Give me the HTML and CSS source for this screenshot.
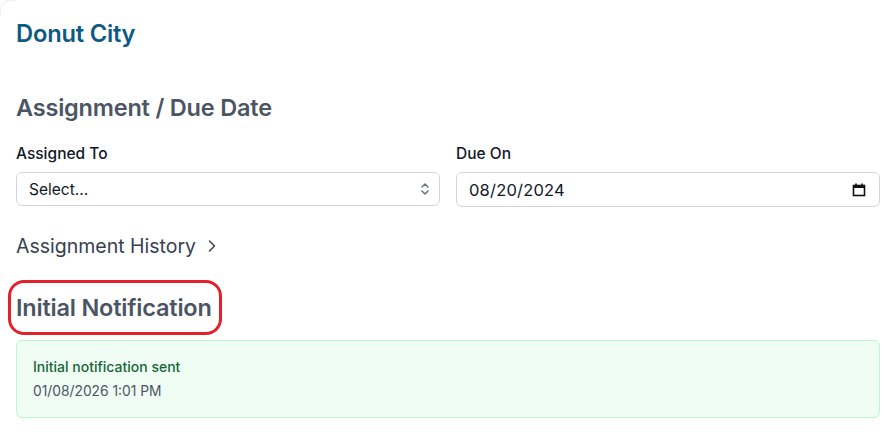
FILE: index.html
```html
<!DOCTYPE html>
<html>
<head>
<meta charset="utf-8">
<link rel="stylesheet" href="styles.css">
</head>
<body>
<div class="page">
  <h1 class="title">Donut City</h1>
  <h2 class="section">Assignment / Due Date</h2>
  <div class="fields">
    <div class="field">
      <div class="label">Assigned To</div>
      <div class="control select">
        <span>Select...</span>
        <svg class="updown" width="10" height="16" viewBox="0 0 10 16"><path d="M2 6l3-3 3 3M2 10l3 3 3-3" fill="none" stroke="#6b7280" stroke-width="1.5" stroke-linecap="round" stroke-linejoin="round"/></svg>
      </div>
    </div>
    <div class="field">
      <div class="label">Due On</div>
      <div class="control date">
        <span>08/20/2024</span>
        <svg class="cal" width="14" height="14" viewBox="0 0 14 14"><rect x="1.5" y="2.5" width="11" height="10" fill="none" stroke="#111" stroke-width="1.6"/><rect x="1.5" y="2.5" width="11" height="2.5" fill="#111"/><path d="M4 0.5v2.5M10 0.5v2.5" stroke="#111" stroke-width="1.6"/></svg>
      </div>
    </div>
  </div>
  <div class="history">Assignment History <svg width="10" height="14" viewBox="0 0 10 14"><path d="M2.5 2l5 5-5 5" fill="none" stroke="#374151" stroke-width="1.5" stroke-linecap="round" stroke-linejoin="round"/></svg></div>
  <div class="notif-head"><h2 class="section">Initial Notification</h2></div>
  <div class="card">
    <div class="card-title">Initial notification sent</div>
    <div class="card-date">01/08/2026 1:01 PM</div>
  </div>
</div>
</body>
</html>
```
FILE: styles.css
```css
* { box-sizing: border-box; }
html, body { margin: 0; background: #fff; }
body { font-family: Inter, "Noto Sans", sans-serif; color: #111827; }
.page {
  width: 886px; height: 445px; padding: 18px 6px 0 16px;
  position: relative; overflow: hidden;
}
.page::before {
  content: ""; position: absolute; left: 0; top: 0; width: 14px; height: 14px;
  border-top: 1px solid #eceef1; border-left: 1px solid #eceef1; border-top-left-radius: 10px;
}
.title { margin: 0; font-size: 23.7px; font-weight: 600; color: #0e5a82; line-height: 32px; letter-spacing: -0.2px; }
.section { margin: 0; font-size: 23.5px; font-weight: 600; color: #4b5563; line-height: 30px; letter-spacing: -0.2px; }
.title + .section { margin-top: 43px; }
.fields { display: grid; grid-template-columns: 1fr 1fr; gap: 16px; margin-top: 21px; }
.label { font-size: 15.5px; font-weight: 500; line-height: 20px; color: #111827; }
.control {
  margin-top: 8px; height: 34px; border: 1px solid #d1d5db; border-radius: 6px;
  display: flex; align-items: center; justify-content: space-between; padding: 0 9px 0 12px;
}
.select span { font-size: 15.5px; color: #111827; }
.date { height: 35px; padding-left: 12px; padding-right: 13px; }
.date span { font-size: 16.5px; color: #111827; letter-spacing: 0.2px; }
.history { margin-top: 27px; font-size: 19.5px; color: #374151; line-height: 24px; display: flex; align-items: center; gap: 11px; }
.notif-head { margin-top: 35px; position: relative; display: inline-block; }
.notif-head::after {
  content: ""; position: absolute; left: -8px; top: -13px; right: -10px; bottom: -12px;
  border: 3px solid #e5202a; border-radius: 16px;
}
.card {
  margin-top: 17px; width: 864px; height: 78px; background: #effdf4; border: 1px solid #bbf7d0; border-radius: 6px;
  padding: 17px 16px;
}
.card-title { font-size: 14px; font-weight: 500; color: #166534; line-height: 18px; }
.card-date { font-size: 13.8px; color: #4b5563; line-height: 18px; margin-top: 6px; }
```
